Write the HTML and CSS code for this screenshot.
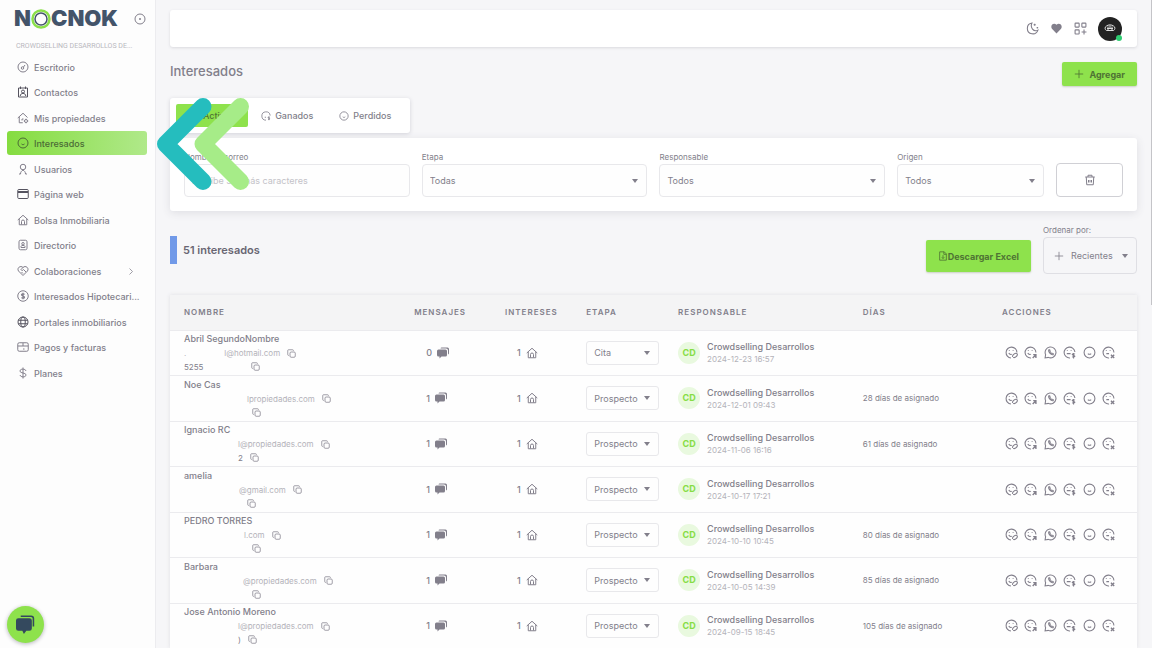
FILE: index.html
```html
<!DOCTYPE html>
<html lang="es">
<head>
     <meta charset="UTF-8">
     <meta name="viewport" content="width=device-width, initial-scale=1.0">
     <title>Interesados</title>
     <link rel="stylesheet" href="styles.css">
</head>
<body>
     <!-- shared icons -->
     <svg class="sprite" aria-hidden="true">
          <symbol id="i-gauge" viewBox="0 0 24 24"><circle cx="12" cy="12" r="10"/><circle cx="11" cy="14" r="2.5"/><path d="M13 12l3-4"/></symbol>
          <symbol id="i-contact" viewBox="0 0 24 24"><path d="M3 4h18v18H3zM7 1v5M17 1v5"/><circle cx="12" cy="11" r="3"/><path d="M6.500 20c0-7 11-7 11 0"/></symbol>
          <symbol id="i-homegear" viewBox="0 0 24 24"><path d="M1.500 12L12 2.500 21 11M4.500 10v11.500h7"/><circle cx="18" cy="18" r="3"/><path d="M18 13.500v1.500M18 21v1.500M13.500 18H15M21 18h1.500M10 17v-3h3"/></symbol>
          <symbol id="i-face" viewBox="0 0 24 24"><circle cx="12" cy="12" r="10"/><path d="M9 14c1.500 1.800 4.500 1.800 6 0"/></symbol>
          <symbol id="i-user" viewBox="0 0 24 24"><circle cx="12" cy="8" r="5.500"/><path d="M4 22h3c0-4 2-6 5-8 3 2 5 4 5 8h3"/></symbol>
          <symbol id="i-window" viewBox="0 0 24 24"><rect x="1.500" y="3" width="21" height="18" rx="2"/><path d="M2 7h20M2 9h20"/></symbol>
          <symbol id="i-home" viewBox="0 0 24 24"><path d="M1.500 12L12 2.500 22.500 12M4.500 10v11.500h15V10M9 21v-6a3 3 0 0 1 6 0v6"/></symbol>
          <symbol id="i-directory" viewBox="0 0 24 24"><rect x="4" y="2.500" width="16" height="19" rx="3"/><circle cx="12" cy="9.500" r="2.500"/><path d="M8 17v-2c0-3 8-3 8 0v2z"/></symbol>
          <symbol id="i-collab" viewBox="0 0 24 24"><path d="M12 21L3 12C-1 6 7 0 12 5c5-5 13 1 9 7zM12 5L8 9c1 3 4 2 5 0l5 5M9 14l3 3"/></symbol>
          <symbol id="i-coin" viewBox="0 0 24 24"><circle cx="12" cy="12" r="10.500"/><path d="M15 9c-1-2-6-2-6 .500 0 3 6 2 6 5 0 2.500-5 2.500-6 .500M12 5.500v13" stroke-width="2.500"/></symbol>
          <symbol id="i-globe" viewBox="0 0 24 24"><circle cx="12" cy="12" r="10"/><ellipse cx="12" cy="12" rx="4.500" ry="10"/><path d="M2.500 8.500h19M2.500 15.500h19"/></symbol>
          <symbol id="i-card" viewBox="0 0 24 24"><rect x="1.500" y="3.500" width="21" height="17" rx="3"/><path d="M2 10h20M12 4v6M12 16h3"/></symbol>
          <symbol id="i-dollar" viewBox="0 0 24 24"><path d="M18 8c-1-5-12-5-12 0 0 5 12 3 12 8 0 5-11 5-12 0M12 1v22"/></symbol>
          <symbol id="i-plus" viewBox="0 0 24 24"><path d="M12 2v20M2 12h20"/></symbol>
          <symbol id="i-copy" viewBox="0 0 24 24"><rect x="8" y="8" width="14" height="14" rx="3"/><path d="M5 17H4a2 2 0 0 1-2-2V4a2 2 0 0 1 2-2h11a2 2 0 0 1 2 2v1"/></symbol>
          <symbol id="i-trash" viewBox="0 0 24 24"><path d="M2.500 6h19M8 6V2.500h8V6M4.500 6l1 15.500h13l1-15.500M9 12v5M12 12v5M15 12v5"/></symbol>
          <symbol id="i-file" viewBox="0 0 24 24"><path d="M4 2h11l5 5v15H4zM14 2v6h6M12 10v8M9 15l3 3 3-3"/></symbol>
          <symbol id="i-chat" viewBox="0 0 24 24"><path class="solid" d="M9 1h12a3 3 0 0 1 3 3v8a3 3 0 0 1-2 3V7a4 4 0 0 0-4-4H7a3 3 0 0 1 2-2z"/><path class="solid" d="M3 5h14a3 3 0 0 1 3 3v8a3 3 0 0 1-3 3H9l-4 4v-4H3a3 3 0 0 1-3-3V8a3 3 0 0 1 3-3z"/></symbol>
          <symbol id="i-won" viewBox="0 0 24 24"><path d="M12 22A10 10 0 1 1 22 11M9 15h3"/><path d="M21 15c-1-1-4-1-4 .500 0 2 4 1 4 3.500 0 1.500-3 1.500-4 .500M19 13.500v8.500" stroke-width="2"/></symbol>
          <symbol id="i-edit" viewBox="0 0 24 24"><path d="M11 22A10 10 0 1 1 22 12M8 8v1M15 8v1M7 13c1 2 4 3 6 2"/><path d="M14 20c-1-3 5-8 8-6s-3 9-7 7" stroke-width="2"/></symbol>
          <symbol id="i-move" viewBox="0 0 24 24"><path d="M13 22A10 10 0 1 1 22 12M8 8v1M15 8v1M7 13c1 2 4 3 6 2"/><path d="M16 22l6-6M17 16h5v6" stroke-width="2.500"/></symbol>
          <symbol id="i-whats" viewBox="0 0 24 24"><path d="M2 22l1-6a10 10 0 1 1 5 5zM9 7c-2 4 4 10 8 9v-2l-3-1-1 1-2-2 .500-2-1-3z"/></symbol>
          <symbol id="i-sale" viewBox="0 0 24 24"><path d="M13 22A10 10 0 1 1 22 11M8 8v1M15 8v1M7 14h7"/><path d="M22 15c-1-1-5-1-5 .500 0 2 5 1 5 3.500 0 1.500-4 1.500-5 .500M19.500 13v10" stroke-width="2"/></symbol>
          <symbol id="i-lost" viewBox="0 0 24 24"><path d="M13 22A10 10 0 1 1 22 12M8 8v1M15 8v1M8 14h5"/><path d="M16.500 16l6 6M22.500 16l-6 6" stroke-width="2.500"/></symbol>
     </svg>

     <div class="app">
          <aside class="sidebar">
               <div class="brand">
                    <span class="logo">N<svg class="logo-ring" viewBox="0 0 20 20" role="img" aria-label="O"><circle cx="10" cy="10" r="8.500" stroke="#8be04a" stroke-width="2.500"/><circle cx="10" cy="10" r="6" stroke="#43546a" stroke-width="1.500"/></svg>CNOK</span>
                    <button type="button" class="pin" aria-label="Fijar menú"><svg class="icon" viewBox="0 0 24 24"><circle cx="12" cy="12" r="10"/><circle class="solid" cx="12" cy="12" r="2"/></svg></button>
               </div>
               <p class="company">CROWDSELLING DESARROLLOS DE...</p>
               <nav>
                    <ul class="menu">
                         <li><a href="#"><svg class="icon"><use href="#i-gauge"/></svg>Escritorio</a></li>
                         <li><a href="#"><svg class="icon dark"><use href="#i-contact"/></svg>Contactos</a></li>
                         <li><a href="#"><svg class="icon"><use href="#i-homegear"/></svg>Mis propiedades</a></li>
                         <li><a href="#" class="active"><svg class="icon"><use href="#i-face"/></svg>Interesados</a></li>
                         <li><a href="#"><svg class="icon"><use href="#i-user"/></svg>Usuarios</a></li>
                         <li><a href="#"><svg class="icon dark"><use href="#i-window"/></svg>Página web</a></li>
                         <li><a href="#"><svg class="icon"><use href="#i-home"/></svg>Bolsa Inmobiliaria</a></li>
                         <li><a href="#"><svg class="icon"><use href="#i-directory"/></svg>Directorio</a></li>
                         <li><a href="#"><svg class="icon"><use href="#i-collab"/></svg>Colaboraciones<svg class="chevron" viewBox="0 0 8 12"><path d="M2 2l4 4-4 4"/></svg></a></li>
                         <li><a href="#"><svg class="icon"><use href="#i-coin"/></svg>Interesados Hipotecari...</a></li>
                         <li><a href="#"><svg class="icon dark"><use href="#i-globe"/></svg>Portales inmobiliarios</a></li>
                         <li><a href="#"><svg class="icon"><use href="#i-card"/></svg>Pagos y facturas</a></li>
                         <li><a href="#"><svg class="icon"><use href="#i-dollar"/></svg>Planes</a></li>
                    </ul>
               </nav>
          </aside>

          <main class="main">
               <header class="topbar">
                    <button type="button" class="tool" aria-label="Modo oscuro"><svg viewBox="0 0 24 24"><path d="M11 2a10 10 0 1 0 11 13C14 19 7 10 11 2zM16 3v4M14 5h4M21 9v3M19.500 10.500h3"/></svg></button>
                    <button type="button" class="tool" aria-label="Favoritos"><svg viewBox="0 0 24 24"><path class="solid" d="M12 21L4 13C-1 6 7 0 12 5c5-5 13 1 8 8z"/></svg></button>
                    <button type="button" class="tool" aria-label="Aplicaciones"><svg viewBox="0 0 24 24"><rect x="2" y="2" width="7.500" height="7.500" rx="1"/><rect x="14.500" y="2" width="7.500" height="7.500" rx="1"/><rect x="2" y="14.500" width="7.500" height="7.500" rx="1"/><path d="M18.500 14v9M14 18.500h9"/></svg></button>
                    <button type="button" class="profile" aria-label="Perfil"><svg viewBox="0 0 24 16"><path d="M5 13a5 5 0 0 1 0-9c3-3 11-3 14 0a5 5 0 0 1 0 9zM8 5v7M12 3v6M16 5v7M6 9h12"/></svg><span class="online"></span></button>
               </header>

               <div class="heading">
                    <h1>Interesados</h1>
                    <button type="button" class="btn btn-add"><svg class="icon-sm"><use href="#i-plus"/></svg>Agregar</button>
               </div>

               <div class="tabs">
                    <button type="button" class="tab selected"><svg class="icon-sm"><use href="#i-face"/></svg>Activos</button>
                    <button type="button" class="tab"><svg class="icon-sm"><use href="#i-won"/></svg>Ganados</button>
                    <button type="button" class="tab"><svg class="icon-sm"><use href="#i-face"/></svg>Perdidos</button>
               </div>

               <form class="filters">
                    <div class="field">
                         <label for="search">Nombre o correo</label>
                         <input type="text" id="search" placeholder="Escribe 3 o más caracteres">
                    </div>
                    <div class="field">
                         <label for="stage">Etapa</label>
                         <select id="stage"><option>Todas</option></select>
                    </div>
                    <div class="field">
                         <label for="owner">Responsable</label>
                         <select id="owner"><option>Todos</option></select>
                    </div>
                    <div class="field">
                         <label for="origin">Origen</label>
                         <select id="origin"><option>Todos</option></select>
                    </div>
                    <button type="reset" class="clear" aria-label="Limpiar filtros"><svg class="icon"><use href="#i-trash"/></svg></button>
               </form>

               <div class="summary">
                    <h2>51 interesados</h2>
                    <button type="button" class="btn btn-excel"><svg class="icon-sm"><use href="#i-file"/></svg>Descargar Excel</button>
                    <div class="order">
                         <label for="order">Ordenar por:</label>
                         <div class="order-box">
                              <svg class="icon-sm"><use href="#i-plus"/></svg>
                              <select id="order"><option>Recientes</option></select>
                         </div>
                    </div>
               </div>

               <table class="leads">
                    <thead>
                         <tr>
                              <th class="c-name">Nombre</th>
                              <th class="c-msg">Mensajes</th>
                              <th class="c-int">Intereses</th>
                              <th class="c-stage">Etapa</th>
                              <th class="c-owner">Responsable</th>
                              <th class="c-days">Días</th>
                              <th class="c-actions">Acciones</th>
                         </tr>
                    </thead>
                    <tbody id="rows"></tbody>
               </table>
          </main>
     </div>

     <svg class="pointer" viewBox="0 0 92 92" aria-hidden="true">
          <path d="M46 8.500L8.500 46 46 83.500" stroke="#25bdbe"/>
          <path d="M83.500 8.500L46 46l37.500 37.500" stroke="#a6ec88"/>
     </svg>
     <button type="button" class="chat" aria-label="Chat"><svg viewBox="0 0 24 24"><path d="M6 1.500h13a3 3 0 0 1 3 3v10" fill="none" stroke="#34495e" stroke-width="2"/><path d="M3 4h14a3 3 0 0 1 3 3v10a3 3 0 0 1-3 3h-4l-3 4-2-4H3a3 3 0 0 1-3-3V7a3 3 0 0 1 3-3z" fill="#34495e"/></svg></button>
     <div class="scroll-thumb"></div>
     <script src="script.js"></script>
</body>
</html>
```

FILE: styles.css
```css
* {
     box-sizing: border-box;
}

body {
     margin: 0;
     background: #f6f6f8;
     color: #827f8b;
     font-family: Inter, "Liberation Sans", sans-serif;
     font-size: 9px;
     overflow: hidden;
}

button, input, select {
     font: inherit;
     color: inherit;
}

button {
     cursor: pointer;
     padding: 0;
     border: 0;
     background: none;
}

h1, h2, p, ul {
     margin: 0;
     padding: 0;
     font-weight: 500;
}

svg {
     fill: none;
     stroke: currentColor;
     stroke-width: 2;
     flex: none;
}

.solid {
     fill: currentColor;
     stroke: none;
}

.sprite {
     display: none;
}

.icon {
     width: 12px;
     height: 12px;
}

.icon-sm {
     width: 10px;
     height: 10px;
}

.dark {
     color: #55535f;
}

.app {
     display: flex;
     height: 100vh;
}

/* sidebar */
.sidebar {
     width: 156px;
     flex: none;
     padding: 9px 9px 0 7px;
     background: #fdfdfd;
     border-right: 1px solid #ececef;
}

.brand {
     display: flex;
     align-items: center;
     justify-content: space-between;
     height: 19px;
     padding-left: 7px;
}

.logo {
     display: flex;
     align-items: center;
     color: #43546a;
     font-size: 22px;
     font-weight: 900;
     line-height: 19px;
}

.logo-ring {
     width: 20px;
     height: 20px;
}

.pin {
     display: flex;
}

.company {
     padding: 13px 0 0 9px;
     font-family: Roboto, "Liberation Sans", sans-serif;
     font-size: 7px;
     font-weight: 400;
     line-height: 10px;
     color: #b9b8be;
     white-space: nowrap;
}

.menu {
     list-style: none;
     padding-top: 4px;
}

.menu li {
     margin-bottom: 1px;
}

.menu li:nth-child(even) {
     margin-bottom: 2px;
}

.menu a {
     display: flex;
     align-items: center;
     gap: 5px;
     height: 24px;
     padding-left: 10px;
     border-radius: 3px;
     color: inherit;
     text-decoration: none;
     white-space: nowrap;
}

.menu a.active {
     margin-right: -1px;
     background: linear-gradient(90deg, #85dc40, #b0e98a);
     color: #4b6b36;
     font-weight: 500;
}

.chevron {
     width: 6px;
     height: 9px;
     margin-left: auto;
     margin-right: 12px;
     stroke-width: 1;
}

/* main */
.main {
     flex: 1;
     min-width: 0;
     padding: 10px 15px 0 14px;
}

.topbar {
     display: flex;
     align-items: center;
     justify-content: flex-end;
     gap: 11px;
     height: 37px;
     padding-right: 15px;
     background: #fff;
     border-radius: 3px;
     box-shadow: 0 1px 3px #d9d9de;
}

.tool, .tool svg {
     display: block;
     width: 13px;
     height: 13px;
}

.profile {
     position: relative;
     width: 24px;
     height: 24px;
     border-radius: 50%;
     background: #222;
     color: #ddd;
}

.profile svg {
     width: 12px;
     height: 8px;
}

.online {
     position: absolute;
     right: 0;
     bottom: 0;
     width: 6px;
     height: 6px;
     border-radius: 50%;
     background: #2ecc71;
}

.heading {
     display: flex;
     justify-content: space-between;
     padding-top: 15px;
}

h1 {
     font-size: 13px;
     line-height: 18px;
}

.btn {
     display: flex;
     align-items: center;
     justify-content: center;
     background: #8ee24c;
     border-radius: 2px;
     box-shadow: 0 1px 2px #c9cfc4;
     color: #4f7434;
     font-weight: 700;
}

.btn-add {
     gap: 5px;
     height: 24px;
     padding: 0 12px;
}

.tabs {
     display: inline-flex;
     height: 35px;
     margin-top: 12px;
     padding: 6px;
     background: #fff;
     border-radius: 3px;
     box-shadow: 0 1px 4px #d2d2d8;
     vertical-align: top;
}

.tab {
     display: flex;
     align-items: center;
     gap: 4px;
     padding: 0 13px;
     border-radius: 2px;
     font-weight: 500;
}

.tab.selected {
     background: #8ee24c;
     color: #4f7434;
}

.filters {
     display: grid;
     grid-template-columns: 226fr 226fr 226fr 147fr 67fr;
     column-gap: 12px;
     align-items: end;
     margin-top: 5px;
     padding: 13px 14px 14px;
     background: #fff;
     border-radius: 3px;
     box-shadow: 0 2px 8px #dedee3;
}

.field {
     display: flex;
     flex-direction: column;
     gap: 1px;
}

label {
     font-size: 8px;
     line-height: 12px;
}

input, select {
     width: 100%;
     height: 33px;
     padding: 0 7px;
     border: 1px solid #e8e8eb;
     border-radius: 4px;
     background-color: #fefefe;
}

input::placeholder {
     color: #c3c2c8;
}

select {
     appearance: none;
     background-image: url("data:image/svg+xml,%3Csvg xmlns='http://www.w3.org/2000/svg' viewBox='0 0 6 4'%3E%3Cpath d='M0 0h6L3 4z' fill='%23827f8b'/%3E%3C/svg%3E");
     background-repeat: no-repeat;
     background-position: right 8px center;
     background-size: 6px 4px;
}

.clear {
     display: flex;
     align-items: center;
     justify-content: center;
     height: 34px;
     border: 1px solid #d0d0d5;
     border-radius: 4px;
}

.summary {
     display: flex;
     align-items: flex-end;
     padding-top: 13px;
}

h2 {
     margin-right: auto;
     margin-bottom: 10px;
     padding-left: 6px;
     border-left: 7px solid #7199e8;
     font-size: 11px;
     font-weight: 600;
     line-height: 28px;
     color: #696673;
}

.btn-excel {
     height: 32px;
     margin: 0 12px 2px 0;
     padding: 0 12px;
}

.order-box {
     display: flex;
     align-items: center;
     height: 37px;
     margin-top: 1px;
     padding-left: 10px;
     border: 1px solid #dfdfe4;
     border-radius: 4px;
}

.order-box select {
     width: 72px;
     height: 35px;
     border: 0;
     background-color: transparent;
}

/* table */
.leads {
     width: 100%;
     margin-top: 21px;
     table-layout: fixed;
     border-collapse: collapse;
     background: #fefefe;
     box-shadow: 0 0 4px #dedee3;
}

.leads th {
     height: 35px;
     padding: 0 0 0 14px;
     background: #f4f4f5;
     font-size: 8px;
     font-weight: 600;
     letter-spacing: 1px;
     text-align: left;
     text-transform: uppercase;
}

.leads td {
     height: 45px;
     padding: 0 0 0 14px;
     border-top: 1px solid #ebebee;
     white-space: nowrap;
}

.leads tr:nth-child(even) td {
     height: 46px;
}

.c-name {
     width: 23.8%;
}

.c-msg {
     width: 9.4%;
}

.c-int {
     width: 8.4%;
}

.c-stage {
     width: 9.5%;
}

.c-owner {
     width: 19.1%;
}

.c-days {
     width: 14.4%;
}

.name {
     line-height: 14px;
     font-weight: 500;
}

.line {
     display: flex;
     align-items: center;
     height: 14px;
     font-size: 8px;
     color: #b4b3ba;
}

.phone {
     height: 13px;
     color: #827f8b;
}

.copy {
     display: flex;
     margin-left: 7px;
     color: #827f8b;
}

.copy svg {
     width: 9px;
     height: 9px;
}

.count {
     display: flex;
     align-items: center;
     gap: 5px;
     padding-left: 12px;
     font-weight: 500;
}

.leads .stage {
     width: 73px;
     height: 24px;
     border-radius: 3px;
}

.owner {
     display: flex;
     align-items: center;
     gap: 7px;
}

.avatar {
     width: 22px;
     border-radius: 50%;
     background: #e9f9df;
     color: #86dd45;
     font-weight: 700;
     line-height: 22px;
     text-align: center;
}

.owner-name {
     font-weight: 500;
     line-height: 13px;
}

.date {
     font-size: 8px;
     line-height: 12px;
     color: #b4b3ba;
}

.days {
     font-size: 8px;
}

.actions {
     display: flex;
     justify-content: space-between;
     max-width: 113px;
     padding-left: 3px;
}

.actions button, .actions svg {
     display: block;
     width: 13px;
     height: 13px;
}

/* floating items */
.pointer {
     position: absolute;
     left: 157px;
     top: 98px;
     width: 92px;
     height: 92px;
     stroke-width: 17;
     stroke-linecap: round;
     stroke-linejoin: round;
}

.chat {
     position: fixed;
     left: 7px;
     bottom: 5px;
     display: flex;
     align-items: center;
     justify-content: center;
     width: 37px;
     height: 37px;
     border-radius: 50%;
     background: #8ee24c;
     box-shadow: 0 1px 4px #b5b5bb;
}

.chat svg {
     width: 19px;
     height: 19px;
     stroke: none;
}

.scroll-thumb {
     position: fixed;
     top: 0;
     right: 0;
     width: 1px;
     height: 47vh;
     background: #c4c4c8;
}
```

FILE: script.js
```js
"use strict";
// mailPad and phonePad are the widths of the hidden part of each value
var leads = [
     {name: "Abril SegundoNombre", dot: ".", mailPad: 38, mail: "l@hotmail.com", phonePad: 0, phone: "5255", tail: 41, msg: 0, stage: "Cita", date: "2024-12-23 16:57", days: ""},
     {name: "Noe Cas", mailPad: 63, mail: "lpropiedades.com", phonePad: 61, phone: "", tail: 0, msg: 1, stage: "Prospecto", date: "2024-12-01 09:43", days: "28 días de asignado"},
     {name: "Ignacio RC", mailPad: 54, mail: "l@propiedades.com", phonePad: 54, phone: "2", tail: 0, msg: 1, stage: "Prospecto", date: "2024-11-06 16:16", days: "61 días de asignado"},
     {name: "amelia", mailPad: 55, mail: "@gmail.com", phonePad: 56, phone: "", tail: 0, msg: 1, stage: "Prospecto", date: "2024-10-17 17:21", days: ""},
     {name: "PEDRO TORRES", mailPad: 60, mail: "l.com", phonePad: 61, phone: "", tail: 0, msg: 1, stage: "Prospecto", date: "2024-10-10 10:45", days: "80 días de asignado"},
     {name: "Barbara", mailPad: 59, mail: "@propiedades.com", phonePad: 61, phone: "", tail: 0, msg: 1, stage: "Prospecto", date: "2024-10-05 14:39", days: "85 días de asignado"},
     {name: "Jose Antonio Moreno", mailPad: 54, mail: "l@propiedades.com", phonePad: 54, phone: ")", tail: 0, msg: 1, stage: "Prospecto", date: "2024-09-15 18:45", days: "105 días de asignado"}
];
var actions = [["edit", "Editar"], ["move", "Reasignar"], ["whats", "WhatsApp"], ["sale", "Ganado"], ["face", "Detalle"], ["lost", "Perdido"]];

function icon(id, cls) {
     return '<svg class="' + (cls || "icon") + '"><use href="#i-' + id + '"/></svg>';
}
function pad(width) {
     return '<span style="width:' + width + 'px"></span>';
}
function copyButton() {
     return '<button type="button" class="copy" aria-label="Copiar">' + icon("copy") + '</button>';
}

var html = "";
leads.forEach(function (lead) {
     html += '<tr><td><div class="name">' + lead.name + '</div>' +
          '<div class="line">' + (lead.dot || "") + pad(lead.mailPad) + lead.mail + copyButton() + '</div>' +
          '<div class="line phone">' + pad(lead.phonePad) + lead.phone + pad(lead.tail) + copyButton() + '</div></td>' +
          '<td><div class="count">' + lead.msg + icon("chat") + '</div></td>' +
          '<td><div class="count">1' + icon("home") + '</div></td>' +
          '<td><select class="stage" aria-label="Etapa de ' + lead.name + '"><option>' + lead.stage + '</option></select></td>' +
          '<td><div class="owner"><span class="avatar">CD</span><div><div class="owner-name">Crowdselling Desarrollos</div><div class="date">' + lead.date + '</div></div></div></td>' +
          '<td class="days">' + lead.days + '</td>' +
          '<td><div class="actions">';
     actions.forEach(function (action) {
          html += '<button type="button" aria-label="' + action[1] + '">' + icon(action[0]) + '</button>';
     });
     html += '</div></td></tr>';
});
document.getElementById("rows").innerHTML = html;
```
